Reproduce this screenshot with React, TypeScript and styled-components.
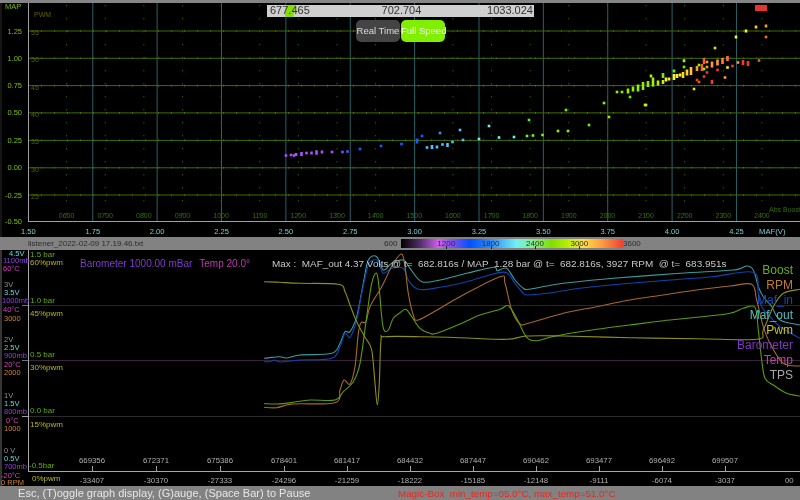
import styled, { createGlobalStyle } from "styled-components";

const GlobalStyle = createGlobalStyle`
	html, body {
		margin: 0;
		padding: 0;
		background: #000;
	}
	#root {
		width: 800px;
		height: 500px;
		overflow: hidden;
	}
`;

const Page = styled.div`
	width: 800px;
	height: 500px;
	display: flex;
	flex-direction: column;
	background: #000;
	font-family: "Liberation Sans", Arial, sans-serif;
	filter: blur(0.45px);
`;

const TopEdge = styled.div`
	height: 3px;
	background: #858585;
`;

const Panel = styled.div<{ $height: number }>`
	position: relative;
	height: ${(p) => p.$height}px;
	background: #000;
	overflow: hidden;
`;

const Chart = styled.svg`
	display: block;
	width: 800px;
	height: 100%;
	font-family: "Liberation Sans", Arial, sans-serif;
`;

const Controls = styled.div`
	position: absolute;
	left: 267px;
	top: 2px;
	width: 267px;
	display: flex;
	flex-direction: column;
	align-items: center;
	gap: 3px;
`;

const RangeSlider = styled.div`
	position: relative;
	width: 100%;
	height: 12px;
	box-sizing: border-box;
	padding: 0 1px 0 3px;
	background: #cfcfcf;
	display: flex;
	justify-content: space-between;
	color: #333;
	font-size: 11px;
`;

const RangeValue = styled.span<{ $high?: boolean }>`
	position: relative;
	align-self: ${(p) => (p.$high ? "flex-start" : "flex-end")};
	margin-left: ${(p) => (p.$high ? "6px" : "0")};
	line-height: ${(p) => (p.$high ? "10px" : "13px")};
	white-space: nowrap;
`;

const RangeThumb = styled.div`
	position: absolute;
	left: 18px;
	top: 0;
	width: 11px;
	height: 12px;
	background: #84e000;
	clip-path: polygon(10% 0, 100% 0, 75% 100%, 0 100%);
`;

const SpeedButtons = styled.div`
	display: flex;
	gap: 1px;
`;

const SpeedButton = styled.div<{ $active?: boolean }>`
	width: 44px;
	height: 22px;
	border-radius: 5px;
	background: ${(p) => (p.$active ? "#80f000" : "#444")};
	color: ${(p) => (p.$active ? "#f0fff0" : "#ddd")};
	font-size: 9.5px;
	line-height: 22px;
	text-align: center;
	white-space: nowrap;
`;

const AlarmFlag = styled.div`
	position: absolute;
	left: 755px;
	top: 2px;
	width: 12px;
	height: 6px;
	background: #e5352b;
`;

const StatusBar = styled.div`
	height: 13px;
	background: #828282;
	display: flex;
	align-items: center;
	padding-left: 28px;
	color: #2c2c2c;
	font-size: 8px;
`;

const FileName = styled.span`
	width: 356px;
	white-space: nowrap;
`;

const ScaleEnd = styled.span`
	width: 17px;
`;

const ColorScale = styled.div`
	width: 222px;
	height: 9px;
	box-sizing: border-box;
	padding-left: 23px;
	display: flex;
	background: linear-gradient(
		to right,
		#000 0%,
		#4a2a60 8%,
		#d060f0 17%,
		#8050f0 23%,
		#0050ff 31%,
		#3090ff 41%,
		#70f0f0 52%,
		#80f0a0 58%,
		#80e000 68%,
		#c0f000 76%,
		#ffe040 82%,
		#ffa040 90%,
		#f04030 100%
	);
`;

const ScaleMark = styled.span`
	position: relative;
	width: 44.4px;
	text-align: center;
	line-height: 9px;
	&::after {
		content: "";
		position: absolute;
		left: 50%;
		top: 7px;
		width: 1px;
		height: 3px;
		background: #222;
	}
`;

const InfoRow = styled.div`
	position: absolute;
	left: 80px;
	top: 8px;
	display: flex;
	gap: 7px;
	font-size: 10px;
	line-height: 12px;
	white-space: pre;
`;

const InfoText = styled.span<{ $color: string; $after?: number }>`
	color: ${(p) => p.$color};
	margin-right: ${(p) => p.$after ?? 0}px;
`;

const MaxText = styled.span`
	color: #c8c8c8;
	font-size: 9.94px;
`;

const Legend = styled.div`
	position: absolute;
	right: 7px;
	top: 13px;
	display: flex;
	flex-direction: column;
	align-items: flex-end;
	font-size: 12px;
	line-height: 15px;
`;

const LegendItem = styled.div<{ $color: string }>`
	color: ${(p) => p.$color};
`;

const Footer = styled.div`
	height: 14px;
	background: #828282;
	display: flex;
	align-items: center;
	padding-left: 18px;
	font-size: 11.07px;
	color: #e6e6e6;
	white-space: pre;
`;

const FooterHint = styled.span`
	width: 380px;
`;

const FooterAlert = styled.span`
	color: #e8281e;
	font-size: 9.8px;
`;

const SCATTER_X = ["1.50", "1.75", "2.00", "2.25", "2.50", "2.75", "3.00", "3.25", "3.50", "3.75", "4.00", "4.25"];
const MAP_ROWS = [
	["1.25", "55", 31],
	["1.00", "50", 58.3],
	["0.75", "45", 85.6],
	["0.50", "40", 112.9],
	["0.25", "35", 140.4],
	["0.00", "30", 167.8],
	["-0.25", "25", 195],
] as const;
const RPM_TICKS = Array.from({ length: 19 }, (_, i) => 600 + i * 100);

const PURPLE = "#a850ff";
const BLUE = "#1060ff";
const SKY = "#50c0ff";
const AQUA = "#70f0f0";
const GREEN = "#70f040";
const LIME = "#90f000";
const YEL = "#fff020";
const ORG = "#ff9830";
const RED = "#f83828";

// x, y, height, color
const DOTS: [number, number, number, string][] = [
	[286, 155.5, 2.6, PURPLE], [291, 155, 2.6, PURPLE], [294, 155.5, 2.6, PURPLE], [296, 154.5, 3, PURPLE],
	[301.5, 154, 4, PURPLE], [306.5, 153, 2.6, PURPLE], [311.5, 153, 3, PURPLE], [316.5, 152.5, 4.5, PURPLE],
	[322, 152, 3, PURPLE], [332, 152, 2.6, PURPLE], [342.5, 152, 2.6, "#7050ff"], [347.5, 151.5, 2.6, "#5050ff"],
	[360, 149, 2.6, BLUE], [381, 146, 2.6, BLUE], [401.5, 144, 2.6, BLUE], [417, 141, 5, BLUE], [422, 136, 2.6, BLUE],
	[440, 133, 2.6, "#3090ff"], [460, 130, 2.6, SKY], [489, 126, 2.6, AQUA],
	[427, 147.5, 2.6, SKY], [432, 147, 4, SKY], [437, 147, 3, SKY], [442.5, 144.5, 2.6, SKY], [447.5, 145, 4, SKY],
	[452.5, 142, 2.6, SKY], [463, 140, 2.6, SKY], [479, 139, 2.6, AQUA], [499, 137.5, 2.6, AQUA], [514, 137, 2.6, AQUA],
	[527, 136, 2.6, GREEN], [533, 135.5, 2.6, GREEN], [542.5, 135, 2.6, GREEN], [558, 131, 2.6, LIME], [568, 131, 2.6, LIME],
	[529, 120, 2.6, "#50f040"], [566, 110, 2.6, "#70f000"], [589, 125, 2.6, "#70f000"], [604, 103, 2.6, LIME], [609, 117, 2.6, LIME],
	[645, 105, 2.6, "#c0f000"], [617, 92, 2.6, LIME], [622, 92, 2.6, LIME], [628, 91, 5, LIME], [633, 89, 5, LIME],
	[638, 88, 7, LIME], [643, 86, 8, LIME], [648, 84, 6, LIME], [653, 82, 9, "#a0f000"], [658, 83, 5, "#b8f000"],
	[663, 82, 4, "#c8f000"], [666, 79.5, 4, YEL], [669, 79, 3, YEL], [674, 77, 6, YEL], [677, 76, 4, YEL],
	[680, 75, 3, YEL], [683, 75, 6, "#ffd820"], [687, 72.5, 6, "#ffd030"], [691, 71, 8, "#ffc830"],
	[697, 68.5, 5, ORG], [702, 67.5, 7, "#f06030"], [704, 61, 6, "#f06030"], [707, 62, 2.6, ORG], [707, 67, 2.6, ORG],
	[712, 64.5, 6, ORG], [717.5, 62.5, 6, ORG], [722.5, 61, 6, "#ff8030"], [727.5, 58.5, 5, "#ff7030"],
	[738, 62.5, 2.6, ORG], [743, 62.5, 5, RED], [748, 63.5, 5, RED], [759, 60.5, 2.6, "#f06030"],
	[697, 80, 2.6, RED], [699, 82, 2.6, "#f05030"], [704, 76.5, 2.6, RED], [707, 72.5, 2.6, RED], [717.5, 70, 2.6, RED],
	[712, 82, 4, RED], [732.5, 66, 2.6, RED], [725, 77.5, 2.6, ORG], [727.5, 67.5, 2.6, YEL],
	[699, 65, 2.6, LIME], [704, 69, 2.6, LIME], [651, 76, 3, "#a8f000"], [663, 75.5, 5, "#70f000"], [674, 71, 3, "#70f000"],
	[684, 60.7, 3, "#b0f000"], [684, 67, 2.6, "#70f000"], [694, 89, 2.6, "#c8f000"], [646, 105, 2.6, "#d8f000"], [630, 97, 2.6, "#60f000"],
	[715, 48, 2.6, "#d8f000"], [736, 37, 3, "#fff020"], [746, 31, 3, "#fff820"], [756, 27, 3, "#ffc830"], [766, 26, 3, ORG], [766, 37, 2.6, "#f87020"],
];

// curves were traced from two strips at 3x, so they get scaled back here
const strip = (originX: number, pts: number[][]) =>
	pts.map(([x, y]) => [x / 3 + originX, y / 3 + 250]);

const smooth = (a: number[][], b: number[][]) => {
	const p = [...strip(260, a), ...strip(530, b)];
	let d = `M${p[0][0].toFixed(1)} ${p[0][1].toFixed(1)}`;
	for (let i = 0; i < p.length - 1; i++) {
		const p0 = p[Math.max(i - 1, 0)];
		const p1 = p[i];
		const p2 = p[i + 1];
		const p3 = p[Math.min(i + 2, p.length - 1)];
		const c1x = p1[0] + (p2[0] - p0[0]) / 6;
		const c1y = p1[1] + (p2[1] - p0[1]) / 6;
		const c2x = p2[0] - (p3[0] - p1[0]) / 6;
		const c2y = p2[1] - (p3[1] - p1[1]) / 6;
		d += `C${c1x.toFixed(1)} ${c1y.toFixed(1)} ${c2x.toFixed(1)} ${c2y.toFixed(1)} ${p2[0].toFixed(1)} ${p2[1].toFixed(1)}`;
	}
	return d;
};

const CURVES = [
	{
		color: "#3f9a9a",
		d: smooth(
			[[12, 325], [40, 322], [60, 320], [80, 324], [120, 315], [215, 310], [240, 280], [255, 245], [270, 245], [290, 200], [310, 100], [325, 30], [350, 20], [370, 60], [395, 40], [430, 30], [450, 55], [485, 95], [540, 90], [620, 70], [700, 52], [712, 62], [740, 55], [765, 90], [790, 115], [805, 118]],
			[[50, 108], [100, 100], [250, 85], [450, 70], [610, 60], [650, 48], [670, 60], [685, 110], [700, 140], [725, 170], [750, 210], [810, 225]],
		),
	},
	{
		color: "#0c45b0",
		d: smooth(
			[[12, 335], [30, 335], [45, 330], [60, 336], [120, 330], [215, 325], [240, 290], [255, 250], [270, 262], [290, 210], [305, 130], [325, 45], [340, 30], [355, 35], [370, 70], [395, 55], [430, 55], [445, 90], [475, 118], [540, 112], [620, 95], [700, 72], [740, 68], [765, 100], [790, 130], [805, 135]],
			[[50, 130], [150, 115], [300, 100], [450, 88], [550, 80], [670, 67], [685, 130], [695, 170], [720, 200], [750, 230], [810, 265]],
		),
	},
	{
		color: "#a8682c",
		d: smooth(
			[[12, 472], [50, 473], [100, 462], [225, 458], [240, 420], [252, 390], [270, 402], [285, 350], [295, 250], [303, 218], [318, 215], [330, 170], [365, 110], [400, 40], [425, 12], [435, 50], [445, 130], [460, 195], [475, 210], [540, 175], [600, 140], [720, 80], [735, 100], [755, 180], [780, 222], [805, 220]],
			[[100, 190], [200, 170], [300, 150], [400, 135], [500, 120], [600, 108], [665, 103], [680, 150], [700, 230], [720, 280], [760, 340], [810, 348]],
		),
	},
	{
		color: "#5c9c06",
		d: smooth(
			[[12, 461], [50, 462], [100, 457], [150, 450], [225, 450], [250, 425], [280, 395], [300, 340], [320, 200], [335, 100], [350, 70], [358, 120], [365, 200], [372, 240], [385, 240], [400, 205], [420, 188], [438, 178], [455, 200], [480, 235], [510, 250], [530, 250], [600, 222], [660, 195], [720, 178], [745, 167], [770, 205], [800, 262]],
			[[20, 272], [60, 262], [120, 250], [200, 238], [300, 225], [400, 212], [500, 202], [600, 190], [640, 175], [675, 172], [685, 240], [695, 330], [705, 385], [730, 405], [770, 430], [810, 438]],
		),
	},
	{
		color: "#8e8e1e",
		d: smooth(
			[[12, 95], [60, 97], [120, 100], [235, 103], [255, 125], [270, 165], [290, 215], [315, 262], [335, 300], [345, 400], [352, 465], [358, 400], [363, 270], [375, 260], [480, 260], [600, 263], [740, 268], [800, 258]],
			[[100, 258], [300, 263], [500, 266], [680, 268], [700, 240], [730, 170], [760, 130], [810, 118]],
		),
	},
];

const LEFT_SCALE = [
	["4.5V", 9, 256, "#60d8d8"], ["1100mb", 3, 263, "#9040e0"], ["60°C", 3, 271, "#d840c0"],
	["3V", 4, 287, "#909090"], ["3.5V", 4, 295, "#60d8d8"], ["1000mb", 2, 303, "#9040e0"], ["40°C", 3, 312, "#d840c0"], ["3000", 4, 321, "#d08428"],
	["2V", 4, 342, "#909090"], ["2.5V", 4, 350, "#60d8d8"], ["900mb", 4, 358, "#9040e0"], ["20°C", 4, 367, "#d840c0"], ["2000", 4, 375, "#d08428"],
	["1V", 4, 398, "#909090"], ["1.5V", 4, 406, "#60d8d8"], ["800mb", 4, 414, "#9040e0"], ["0°C", 6, 423, "#d840c0"], ["1000", 4, 431, "#d08428"],
	["0 V", 4, 453, "#909090"], ["0.5V", 4, 461, "#60d8d8"], ["700mb", 4, 469, "#9040e0"], ["-20°C", 1, 477.5, "#d840c0"], ["0 RPM", 1, 484.5, "#d08428"],
] as const;

const BAR_SCALE = [
	["1.5 bar", 30, 257], ["1.0 bar", 30, 302.5], ["0.5 bar", 30, 357], ["0.0 bar", 30, 413], ["-0.5bar", 29, 468],
] as const;

const PWM_SCALE = [
	["60%pwm", 30, 265], ["45%pwm", 30, 316], ["30%pwm", 30, 370], ["15%pwm", 30, 427], ["0%pwm", 32, 481],
] as const;

const SAMPLES = [
	["669356", "-33407", 92], ["672371", "-30370", 156], ["675386", "-27333", 220], ["678401", "-24296", 284],
	["681417", "-21259", 347], ["684432", "-18222", 410], ["687447", "-15185", 473], ["690462", "-12148", 536],
	["693477", "-9111", 599], ["696492", "-6074", 662], ["699507", "-3037", 725],
] as const;

const LEGEND = [
	["Boost", "#6cb010"], ["RPM", "#c07a38"], ["Maf_in", "#1048c0"], ["Maf_out", "#50c0c0"],
	["Pwm", "#c8c818"], ["Barometer", "#7c38c0"], ["Temp", "#c040a8"], ["TPS", "#a8a8a8"],
] as const;

function ScatterChart() {
	return (
		<Chart viewBox="0 3 800 234">
			<line x1="1" y1="3" x2="1" y2="237" stroke="#2a2a2a" />
			{RPM_TICKS.map((rpm, i) => {
				const x = 66.6 + i * 38.63;
				return (
					<g key={rpm}>
						<line x1={x} y1="5" x2={x} y2="221" stroke="#2c6000" strokeWidth="1" strokeDasharray="1.4 11.6" />
						<text x={x} y="218" fontSize="7" fill="#357008" textAnchor="middle">
							{String(rpm).padStart(4, "0")}
						</text>
					</g>
				);
			})}
			{SCATTER_X.map((label, i) => {
				const x = 28.4 + i * 64.37;
				return (
					<g key={label}>
						{i > 0 && <line x1={x} y1="3" x2={x} y2="221" stroke="#2a6068" strokeWidth="1" />}
						<text x={x} y="234" fontSize="7.5" fill="#78d0d0" textAnchor="middle">
							{label}
						</text>
					</g>
				);
			})}
			{MAP_ROWS.map(([map, pwm, y]) => (
				<g key={map}>
					<line x1="28" y1={y} x2="800" y2={y} stroke="#3c6e00" strokeWidth="1" />
					<line x1="28" y1={y} x2="800" y2={y} stroke="#5a6a10" strokeWidth="1.6" strokeDasharray="1 12" />
					<text x="22" y={y + 2.5} fontSize="7.5" fill="#78c000" textAnchor="end">
						{map}
					</text>
					<text x="31" y={y + 4} fontSize="7" fill="#606000">
						{pwm}
					</text>
				</g>
			))}
			<line x1="28.5" y1="3" x2="28.5" y2="221.5" stroke="#a0a0a0" />
			<line x1="28" y1="221.5" x2="800" y2="221.5" stroke="#a0a0a0" />
			<text x="5" y="9" fontSize="7.5" fill="#78c000">MAP</text>
			<text x="22" y="224" fontSize="7.5" fill="#78c000" textAnchor="end">-0.50</text>
			<text x="34" y="17" fontSize="7" fill="#606000">PWM</text>
			<text x="769" y="212" fontSize="7" fill="#357008">Abs Boost</text>
			<text x="759" y="234" fontSize="7.7" fill="#78d0d0">MAF(V)</text>
			{DOTS.map(([x, y, h, color], i) => (
				<rect key={i} x={x - 1.3} y={y - h / 2} width="2.6" height={h} fill={color} />
			))}
		</Chart>
	);
}

function TimeGraph() {
	return (
		<Chart viewBox="0 250 800 236">
			<line x1="1" y1="250" x2="1" y2="486" stroke="#6a6a6a" />
			<line x1="28" y1="305.5" x2="800" y2="305.5" stroke="#2a2440" />
			<line x1="28" y1="360.5" x2="800" y2="360.5" stroke="#3a2038" />
			<line x1="22" y1="416.5" x2="800" y2="416.5" stroke="#2c2c2c" />
			<line x1="22" y1="305.5" x2="28" y2="305.5" stroke="#707070" />
			<line x1="22" y1="360.5" x2="28" y2="360.5" stroke="#707070" />
			<line x1="22" y1="416.5" x2="28" y2="416.5" stroke="#a0a0a0" />
			<line x1="28.5" y1="250" x2="28.5" y2="471.5" stroke="#a8a8a8" />
			<line x1="28" y1="471.5" x2="800" y2="471.5" stroke="#a8a8a8" />
			{LEFT_SCALE.map(([label, x, y, color]) => (
				<text key={label} x={x} y={y} fontSize="7.5" fill={color}>{label}</text>
			))}
			{BAR_SCALE.map(([label, x, y]) => (
				<text key={label} x={x} y={y} fontSize="8" fill="#60b000">{label}</text>
			))}
			{PWM_SCALE.map(([label, x, y]) => (
				<text key={label} x={x} y={y} fontSize="8" fill="#b8b820">{label}</text>
			))}
			{SAMPLES.map(([top, bottom, x]) => (
				<g key={top}>
					<line x1={x + 0.5} y1="466" x2={x + 0.5} y2="471" stroke="#a0a0a0" />
					<text x={x} y="463" fontSize="7.8" fill="#b0b0b0" textAnchor="middle">{top}</text>
					<text x={x} y="483" fontSize="7.8" fill="#b0b0b0" textAnchor="middle">{bottom}</text>
				</g>
			))}
			<text x="785" y="483" fontSize="7.8" fill="#b0b0b0">00</text>
			{CURVES.map((c) => (
				<path key={c.color} d={c.d} fill="none" stroke={c.color} strokeWidth="1.1" strokeLinejoin="round" />
			))}
		</Chart>
	);
}

export default function App() {
	return (
		<Page>
			<GlobalStyle />
			<TopEdge />
			<Panel $height={234}>
				<ScatterChart />
				<Controls>
					<RangeSlider>
						<RangeThumb />
						<RangeValue>677.465</RangeValue>
						<RangeValue $high>702.704</RangeValue>
						<RangeValue>1033.024</RangeValue>
					</RangeSlider>
					<SpeedButtons>
						<SpeedButton>Real Time</SpeedButton>
						<SpeedButton $active>Full Speed</SpeedButton>
					</SpeedButtons>
				</Controls>
				<AlarmFlag />
			</Panel>
			<StatusBar>
				<FileName>listener_2022-02-09 17.19.46.txt</FileName>
				<ScaleEnd>600</ScaleEnd>
				<ColorScale>
					<ScaleMark>1200</ScaleMark>
					<ScaleMark>1800</ScaleMark>
					<ScaleMark>2400</ScaleMark>
					<ScaleMark>3000</ScaleMark>
				</ColorScale>
				<span>3600</span>
			</StatusBar>
			<Panel $height={236}>
				<TimeGraph />
				<InfoRow>
					<InfoText $color="#8038d0">Barometer 1000.00 mBar</InfoText>
					<InfoText $color="#c038b0" $after={15}>Temp 20.0°</InfoText>
					<MaxText>
						{"Max :  MAF_out 4.37 Volts @ t=  682.816s / MAP  1.28 bar @ t=  682.816s, 3927 RPM  @ t=  683.951s"}
					</MaxText>
				</InfoRow>
				<Legend>
					{LEGEND.map(([name, color]) => (
						<LegendItem key={name} $color={color}>{name}</LegendItem>
					))}
				</Legend>
			</Panel>
			<Footer>
				<FooterHint>Esc, (T)oggle graph display, (G)auge, (Space Bar) to Pause</FooterHint>
				<FooterAlert>Magic-Box  min_temp=05.0°C, max_temp=51.0°C</FooterAlert>
			</Footer>
		</Page>
	);
}
